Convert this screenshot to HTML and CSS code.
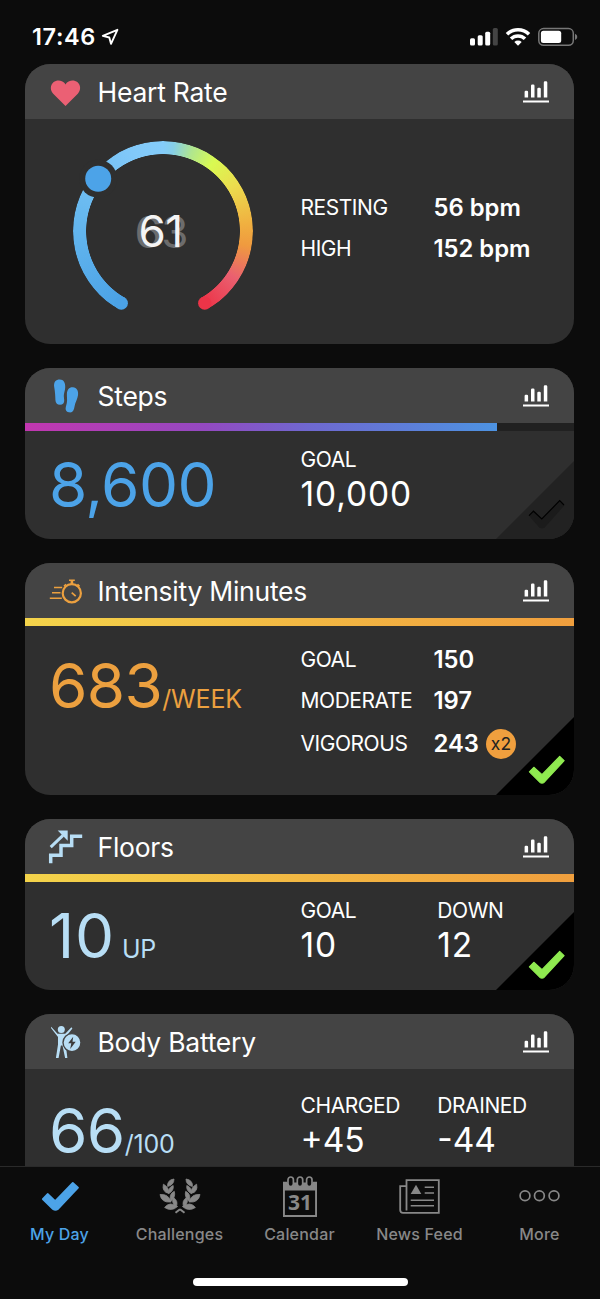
FILE: index.html
```html
<!DOCTYPE html>
<html lang="en">
<head>
<meta charset="utf-8">
<title>My Day</title>
<link rel="stylesheet" href="styles.css">
</head>
<body>
<svg class="defs" width="0" height="0" aria-hidden="true">
  <symbol id="chart" viewBox="0 0 26 22">
    <path d="M1.6 16.5V11a1.2 1.2 0 0 1 1.2-1.2h1.1A1.2 1.2 0 0 1 5.1 11v5.5zM8 16.5V4.7a1.2 1.2 0 0 1 1.2-1.2h1.1a1.2 1.2 0 0 1 1.2 1.2v11.8zM14.3 16.5V8A1.2 1.2 0 0 1 15.5 6.800h1.100A1.200 1.200 0 0 1 17.800 8v8.500zM20.800 16.500V1.400A1.200 1.200 0 0 1 22 .2h1.100a1.200 1.200 0 0 1 1.200 1.200v15.100zM0 19.400h26v2.200H0z" fill="#fff"/>
  </symbol>
  <symbol id="done" viewBox="0 0 78 78">
    <path d="M78 0v78H0z" fill="#000"/>
    <path d="M33.400 54.800 37.800 50.300 46 57.600 63.700 39.400 68.100 43.700 48 65.400Q46 66.800 44 65.400z" fill="#8fea50" stroke="#8fea50" stroke-width="1.200" stroke-linejoin="round"/>
  </symbol>
</svg>
<div class="phone">
  <header class="status">
    <div class="clock">17:46
      <svg width="18" height="18" viewBox="0 0 18 18"><path d="M1.800 7.800 16.400 1.800 10 15.800 8.300 9.500z" fill="none" stroke="#fff" stroke-width="1.900" stroke-linejoin="round"/></svg>
    </div>
    <svg width="110" height="20" viewBox="0 0 110 20">
      <g fill="#fff"><rect x="1" y="11.300" width="5" height="7.300" rx="1.500"/><rect x="8.700" y="8.300" width="5" height="10.300" rx="1.500"/><rect x="16.200" y="4.700" width="5" height="13.900" rx="1.500"/></g>
      <rect x="23.800" y="1" width="5" height="17.600" rx="1.500" fill="#444"/>
      <g fill="none" stroke="#fff" stroke-width="3.500"><path d="M38 7.200a15.600 15.600 0 0 1 22 0"/><path d="M42 11.800a9.900 9.900 0 0 1 14 0"/></g>
      <path d="M45.300 14.900a5.400 5.400 0 0 1 7.400 0L49 18.700z" fill="#fff"/>
      <rect x="69.800" y="1.500" width="34.500" height="16.800" rx="4.800" fill="none" stroke="#777" stroke-width="1.500"/>
      <rect x="71.900" y="3.800" width="20.300" height="12.200" rx="2.500" fill="#fff"/>
      <path d="M106 6.800q2.300 1 2.300 3.100t-2.300 3.100z" fill="#777"/>
    </svg>
  </header>

  <main class="feed">
    <section class="card card-heart">
      <div class="head">
        <svg width="36" height="34" viewBox="0 0 36 34"><path d="M17.500 30.900 5.200 18.800C1.900 15.300 2.200 10 5.400 7.300c3.400-2.900 8.500-2.400 11.100.8l1 1.300 1-1.300c2.600-3.200 7.700-3.700 11.100-.8 3.200 2.700 3.500 8 .2 11.500z" fill="#eb6074"/></svg>
        <h2>Heart Rate</h2><svg class="chart"><use href="#chart"/></svg>
      </div>
      <div class="body">
        <div class="gauge">
          <div class="ring"></div>
          <svg class="marks" viewBox="0 0 180 180"><circle cx="48.300" cy="162.200" r="6.600" fill="#4ba2e6"/><circle cx="131.700" cy="162.200" r="6.600" fill="#ec3448"/><circle cx="25.200" cy="37.700" r="19" fill="#2f2f2f"/><circle cx="25.200" cy="37.700" r="13" fill="#4ca3e8"/></svg>
          <span class="beat ghost">63</span><span class="beat">61</span>
        </div>
        <dl class="rows"><dt>RESTING</dt><dd>56 bpm</dd><dt>HIGH</dt><dd>152 bpm</dd></dl>
      </div>
    </section>

    <section class="card card-steps">
      <div class="head">
        <svg width="36" height="34" viewBox="0 0 36 34" fill="#4ca3e8"><path d="M6.200 8C5.500 3 8 .6 11.700.6c4 0 5.800 3.400 5.500 7.900-.2 3.500-1.400 5.500-1.400 8.500l.4 4c.2 3-1.200 4.800-4.200 4.800s-4.400-1.800-4.600-4.800C7.300 17 7 12 6.200 8z"/><path d="M25 8.200c3.700.4 5.700 3.500 5 8-.6 3.800-2 5.800-2.900 8.800l-1 4.500c-.8 3.100-2.700 4.400-5.300 3.800-2.600-.5-3.700-2.500-3-5.300l1-4c.6-3 0-6 .1-9 .1-4.500 2.600-7.200 6.100-6.800z"/></svg>
        <h2>Steps</h2><svg class="chart"><use href="#chart"/></svg>
      </div>
      <div class="track"><div class="fill steps-fill" style="width:86%"></div></div>
      <div class="body">
        <div class="big blue">8,600</div>
        <div class="stat wide"><span>GOAL</span><b>10,000</b></div>
      </div>
      <svg class="corner" viewBox="0 0 78 78"><path d="M78 0v78H0z" fill="#222"/><path d="M33 54.700 37.500 50.200 45.800 58 63.700 39.600 68.500 44.200 48.500 66.800Q46 68 43.500 66.800z" fill="#1b1b1b"/><path d="M33 54.700 37.500 50.200 45.800 58 63.700 39.600 68 44" fill="none" stroke="#000" stroke-width="1.200"/></svg>
    </section>

    <section class="card card-intensity">
      <div class="head">
        <svg width="36" height="34" viewBox="0 0 36 34" fill="none" stroke="#eca03f"><circle cx="23.800" cy="19.200" r="9.100" stroke-width="2.200"/><path d="M21 6.300h5.800M16 12.300l2-2m11.500 0 2 2" stroke-width="1.600"/><path d="M23.900 7v3" stroke-width="2.600"/><path d="m23.700 18.700 4 3.500" stroke-width="1.700"/><path d="M6 13.500h8.200M4 18.800h8.500M1.800 24.200h12" stroke-width="1.500"/></svg>
        <h2>Intensity Minutes</h2><svg class="chart"><use href="#chart"/></svg>
      </div>
      <div class="track"><div class="fill gold-fill" style="width:100%"></div></div>
      <div class="body">
        <div class="big orange">683<small>/WEEK</small></div>
        <dl class="rows"><dt>GOAL</dt><dd>150</dd><dt>MODERATE</dt><dd>197</dd><dt>VIGOROUS</dt><dd>243<i class="double">x2</i></dd></dl>
      </div>
      <svg class="corner"><use href="#done"/></svg>
    </section>

    <section class="card card-floors">
      <div class="head">
        <svg width="36" height="34" viewBox="0 0 36 34"><path d="M2.700 33.200V25.300H13V15.600H23.700V6.200H34.200" fill="none" stroke="#b8def5" stroke-width="3.500"/><path d="M2.700 17.200 15 5.300" stroke="#b8def5" stroke-width="3"/><path d="M9.700.5h10v10.200z" fill="#b8def5"/></svg>
        <h2>Floors</h2><svg class="chart"><use href="#chart"/></svg>
      </div>
      <div class="track"><div class="fill gold-fill" style="width:100%"></div></div>
      <div class="body">
        <div class="big pale loose">10<small class="spaced">UP</small></div>
        <div class="stat wide"><span>GOAL</span><b>10</b></div>
        <div class="stat wide"><span>DOWN</span><b>12</b></div>
      </div>
      <svg class="corner"><use href="#done"/></svg>
    </section>

    <section class="card card-battery">
      <div class="head">
        <svg width="36" height="34" viewBox="0 0 36 34" fill="#b8def5"><circle cx="13.300" cy="4.600" r="3.500"/><path d="M3.200 1.700 9.500 8.800h7.700l6.200-6.500 1 1.200-6.700 8.500v7.200L19.400 33h-2.300l-2.600-12.500h-1.600L10.600 33H7.900L10 19.500V12L3 3z"/><circle cx="24" cy="17.600" r="9" stroke="#444" stroke-width="1.400"/><path d="m25.200 11.700-5 6.500h3.100l-1.100 5.700 5.500-7.200h-3.200z" fill="#3c3c3c"/></svg>
        <h2>Body Battery</h2><svg class="chart"><use href="#chart"/></svg>
      </div>
      <div class="body">
        <div class="big pale">66<small>/100</small></div>
        <div class="stat"><span>CHARGED</span><b>+45</b></div>
        <div class="stat"><span>DRAINED</span><b>-44</b></div>
      </div>
    </section>
  </main>

  <nav class="tabs">
    <a class="tab active"><svg viewBox="0 0 44 44"><path d="M4.800 25.200 9.600 20 17.200 27.200 34.800 8.900 40 13.700 20 35Q17.400 36.600 15 35z" fill="#4ca3e8" stroke="#4ca3e8" stroke-width="1.800" stroke-linejoin="round"/></svg><span>My Day</span></a>
    <a class="tab"><svg viewBox="0 0 44 44">
      <defs><g id="branch"><path d="M9.600 12.500Q9 6 16 5 16 11 9.600 12.500zM11 19.500Q3.600 18 5.400 10.200 11 13 11 19.500zM10.700 19.500Q9.800 13.500 15.200 11.500 16 17 10.700 19.500zM13 28Q3.400 29 2 20.500 10.500 19.500 13 28zM12.700 27.500Q10.500 20 16.300 17.300 18 23 12.700 27.500zM19.600 32.500Q13.500 38 6.600 33.500 11.500 27 19.600 32.500zM18.300 33Q12.500 28 15.700 23.700 20.500 27 18.300 33z" stroke="#888" stroke-width=".8"/><path d="M22 35.200 17.500 38.800" fill="none" stroke="#888" stroke-width="2"/></g></defs>
      <use href="#branch" fill="#888"/><use href="#branch" fill="#888" transform="matrix(-1 0 0 1 44 0)"/></svg><span>Challenges</span></a>
    <a class="tab"><svg viewBox="0 0 44 44"><path d="M5 7.800h34V43H5zm1.900 8.800v24.500h30.200V16.600z" fill="#888" fill-rule="evenodd"/><g fill="#0c0c0c"><rect x="9" y="0" width="26" height="8.500"/></g><g fill="#0c0c0c" stroke="#888" stroke-width="1.700"><rect x="10" y="3" width="5.400" height="9.500" rx="2.700"/><rect x="19.300" y="3" width="5.400" height="9.500" rx="2.700"/><rect x="28.600" y="3" width="5.400" height="9.500" rx="2.700"/></g><text class="date" x="22" y="35.500">31</text></svg><span>Calendar</span></a>
    <a class="tab"><svg viewBox="0 0 44 44" fill="none" stroke="#888" stroke-width="1.800"><path d="M8.500 36.500V6.200h32.300v32.600H5Q2.200 38.800 2.200 36V12.200h6"/><path d="M12.700 26.300H36M12.700 31.800H36M26.700 13.300H36M26.700 19H36" stroke-width="1.500"/><path d="M12.700 20 18 10.700 23.300 20z" fill="#888" stroke="none"/></svg><span>News Feed</span></a>
    <a class="tab"><svg viewBox="0 0 44 44" fill="none" stroke="#888" stroke-width="1.700"><circle cx="7" cy="21.700" r="4.900"/><circle cx="21.400" cy="21.700" r="4.900"/><circle cx="36" cy="21.700" r="4.900"/></svg><span>More</span></a>
  </nav>
  <div class="home"></div>
</div>
</body>
</html>
```
FILE: styles.css
```css
* { box-sizing: border-box; }
body { margin: 0; background: #0c0c0c; color: #fff; font-family: Inter, "Noto Sans", sans-serif; }
.defs { display: block; }
.phone { width: 600px; height: 1299px; display: flex; flex-direction: column; overflow: hidden; background: #0c0c0c; }

.status { height: 64px; flex: none; display: flex; justify-content: space-between; align-items: center; padding: 10px 21px 0 32px; }
.clock { display: flex; align-items: center; gap: 5px; font-size: 23.5px; font-weight: 600; line-height: 30px; letter-spacing: 0.600px; }

.feed { height: 1102px; flex: none; overflow: hidden; padding: 0 26px 0 25px; display: flex; flex-direction: column; gap: 24px; }
.card { position: relative; flex: none; border-radius: 25px; background: #2f2f2f; overflow: hidden; }
.card-heart { height: 280px; }
.card-steps, .card-floors { height: 171px; }
.card-intensity { height: 232px; }
.card-battery { height: 179px; }

.head { height: 55px; display: flex; align-items: center; padding: 0 25px 0 23px; background: #444; }
.head h2 { flex: 1; margin: 0 0 0 13.500px; font-size: 26.500px; font-weight: 400; line-height: 36px; letter-spacing: -0.250px; }
.chart { width: 26px; height: 22px; }

.track { height: 8px; background: #212121; }
.fill { height: 8px; }
.steps-fill { background: linear-gradient(90deg, #c237b0, #9449c1 38%, #6f68d0 60%, #4d93e2); }
.gold-fill { background: linear-gradient(90deg, #f4d44b, #f2b843 50%, #f09f3e); }

.body { display: flex; padding-left: 24px; }
.big { width: 251.500px; flex: none; margin-top: 22.500px; font-size: 62px; line-height: 62px; letter-spacing: -0.600px; white-space: nowrap; }
.big small { font-size: 25px; letter-spacing: -0.200px; }
.big.loose { letter-spacing: 0.800px; }
.big .spaced { margin-left: 7px; }
.blue { color: #4ca3e8; }
.orange { color: #eca03f; }
.pale { color: #b8def5; }
.stat { width: 137px; padding-top: 16.500px; display: flex; flex-direction: column; gap: 2px; }
.stat span { font-size: 21px; line-height: 24px; letter-spacing: -0.400px; }
.stat b { font-size: 33.500px; font-weight: 400; line-height: 40px; }
.stat.wide b { letter-spacing: 0.900px; }

.rows { display: grid; grid-template-columns: 133px auto; grid-auto-rows: 41px; align-content: start; align-items: center; margin: 0; }
.rows dt { font-size: 21px; line-height: 41px; letter-spacing: -0.450px; }
.rows dd { display: flex; align-items: center; margin: 0; font-size: 23.800px; font-weight: 600; line-height: 41px; }
.card-heart .rows { margin: 68px 0 0 48px; }
.card-intensity .rows { margin-top: 13px; grid-template-rows: 41px 41px 45px; }
.card-intensity .big { margin-top: 29px; }
.card-battery .body { padding-top: 8px; }
.double { width: 30px; height: 30px; margin-left: 7px; border-radius: 50%; background: #f09f3e; color: #222; font-size: 17.500px; font-style: normal; font-weight: 400; line-height: 30px; text-align: center; }
.corner { position: absolute; right: 0; bottom: 0; width: 78px; height: 78px; }

.gauge { position: relative; width: 180px; height: 180px; margin: 22px 0 0 23.500px; }
.ring { width: 180px; height: 180px; border-radius: 50%;
  background: conic-gradient(#84ccfa 0deg, #86cfe8 7deg, #b0e68e 20deg, #d9fa52 36deg, #ecdc4e 58deg, #f0b040 85deg, #ef9a3f 100deg, #ea6070 123deg, #ec3448 150deg, transparent 150deg 210deg, #4ba2e6 210deg, #66b8ef 280deg, #82c9f9 340deg, #84ccfa);
  mask: radial-gradient(circle, transparent 76.500px, #000 77.200px); }
.marks { position: absolute; inset: 0; overflow: visible; }
.beat { position: absolute; left: 66px; top: 65px; font-size: 44px; line-height: 50px; letter-spacing: -0.500px; color: #f4f4f4; }
.beat.ghost { left: 62px; top: 66px; color: #6c6c6c; }

.tabs { height: 92px; flex: none; display: flex; border-top: 1px solid #2a2a2a; background: #0c0c0c; }
.tab { width: 120px; display: flex; flex-direction: column; align-items: center; padding-top: 7px; color: #888; font-size: 16px; font-weight: 500; line-height: 20px; letter-spacing: 0.200px; }
.tab span { margin-right: 1px; }
.tab svg { width: 44px; height: 44px; margin-bottom: 6px; }
.tab.active { color: #4ca3e8; }
.date { fill: #888; font-size: 21px; font-weight: 700; text-anchor: middle; font-family: "Noto Sans", sans-serif; letter-spacing: 0; }
.home { width: 215px; height: 8px; margin: 20px 0 0 193px; border-radius: 4px; background: #fff; }
```
